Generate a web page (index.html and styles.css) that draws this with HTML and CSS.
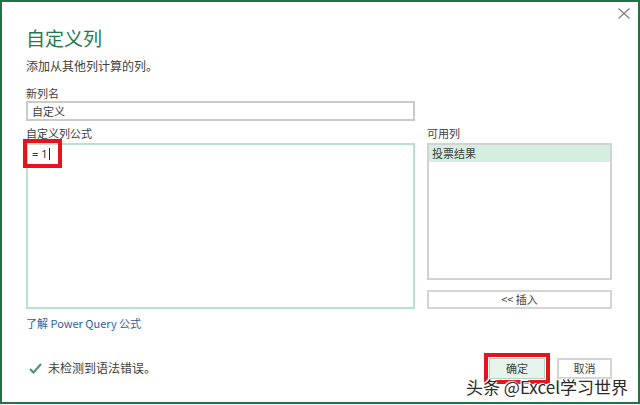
FILE: index.html
```html
<!DOCTYPE html>
<html lang="zh-CN">
<head>
<meta charset="utf-8">
<title>自定义列</title>
<link rel="stylesheet" href="styles.css">
</head>
<body>
<div class="dialog">
  <div class="topbar">
    <svg class="close" width="12" height="11" viewBox="0 0 12 11"><path d="M0.5 0.5 L11.5 10.5 M11.5 0.5 L0.5 10.5" stroke="#7a7a7a" stroke-width="1.1" fill="none"/></svg>
  </div>
  <h1 class="title">自定义列</h1>
  <p class="subtitle">添加从其他列计算的列。</p>
  <div class="label">新列名</div>
  <div class="input">自定义</div>
  <div class="columns">
    <div class="col-left">
      <div class="label">自定义列公式</div>
      <div class="formula">
        <span class="code">= 1</span><span class="caret"></span>
        <div class="mark"></div>
      </div>
    </div>
    <div class="col-right">
      <div class="label">可用列</div>
      <div class="list"><div class="item selected">投票结果</div></div>
      <div class="insert">&lt;&lt; 插入</div>
    </div>
  </div>
  <div class="link">了解 Power Query 公式</div>
  <div class="footer">
    <div class="status">
      <svg class="check" width="13" height="11" viewBox="0 0 13 11"><path d="M1 6 L4.5 9.5 L12 1" stroke="#4d8f6d" stroke-width="2" fill="none"/></svg>
      <span>未检测到语法错误。</span>
    </div>
    <div class="actions">
      <button class="btn primary">确定</button>
      <button class="btn">取消</button>
    </div>
  </div>
  <div class="watermark">头条 @Excel学习世界</div>
</div>
</body>
</html>
```
FILE: styles.css
```css
html, body {
  margin: 0;
  padding: 0;
  background: #ffffff;
}

.dialog {
  position: relative;
  width: 640px;
  height: 404px;
  box-sizing: border-box;
  border: 2px solid #217346;
  padding: 0 26px 0 24px;
  font-family: "Noto Sans CJK SC", "Noto Sans", sans-serif;
  color: #444444;
  overflow: hidden;
}

.topbar {
  display: flex;
  justify-content: flex-end;
  height: 24px;
  box-sizing: border-box;
  padding-top: 6px;
  margin-right: -18px;
}

.close {
  display: block;
}

.title {
  margin: 0;
  font-size: 19px;
  line-height: 24px;
  font-weight: normal;
  color: #24784f;
}

.subtitle {
  margin: 8px 0 0;
  font-size: 12px;
  line-height: 16px;
  color: #404040;
}

.label {
  font-size: 11px;
  line-height: 16px;
  color: #404040;
}

.subtitle + .label {
  margin-top: 11px;
}

.input {
  width: 389px;
  height: 20px;
  box-sizing: border-box;
  border: 2px solid #cbcbcb;
  padding-left: 4px;
  font-size: 11px;
  line-height: 16px;
  color: #404040;
}

.columns {
  display: flex;
  gap: 12px;
  margin-top: 4px;
}

.col-left {
  width: 389px;
}

.col-right {
  width: 185px;
}

.formula {
  position: relative;
  margin-top: 2px;
  height: 166px;
  box-sizing: border-box;
  border: 2px solid #b9e2cc;
  padding: 2px 4px;
  font-family: "Noto Sans", sans-serif;
  font-size: 11px;
  line-height: 14px;
  color: #444444;
}

.code {
  color: #333333;
}

.caret {
  display: inline-block;
  width: 1px;
  height: 12px;
  margin-left: 2px;
  vertical-align: -2px;
  background: #222222;
}

.mark {
  position: absolute;
  left: -5px;
  top: -6px;
  width: 39px;
  height: 29px;
  box-sizing: border-box;
  border: 4px solid #e5141c;
}

.list {
  margin-top: 2px;
  height: 137px;
  box-sizing: border-box;
  border: 2px solid #d2d2d2;
}

.item {
  height: 17px;
  line-height: 17px;
  padding-left: 3px;
  font-size: 11px;
  color: #404040;
}

.item.selected {
  background: #d3efdf;
}

.insert {
  margin-top: 10px;
  height: 19px;
  box-sizing: border-box;
  border: 2px solid #d4d4d4;
  text-align: center;
  font-size: 11px;
  line-height: 15px;
  color: #404040;
}

.link {
  margin-top: 6px;
  font-size: 11px;
  line-height: 16px;
  color: #2f5e9e;
}

.footer {
  display: flex;
  justify-content: space-between;
  align-items: center;
  height: 24px;
  margin-top: 25px;
}

.status {
  display: flex;
  align-items: center;
  gap: 6px;
  padding-left: 3px;
  font-size: 12px;
  line-height: 16px;
  color: #404040;
}

.check {
  display: block;
}

.actions {
  display: flex;
  gap: 12px;
}

.btn {
  width: 55px;
  height: 21px;
  box-sizing: border-box;
  padding: 0;
  background: #ffffff;
  border: 2px solid #d4d4d4;
  font-family: "Noto Sans CJK SC", sans-serif;
  font-size: 11px;
  line-height: 15px;
  color: #404040;
}

.btn.primary {
  width: 56px;
  background: #e6f4ec;
  border: 1px solid #a9d6bc;
  outline: 4px solid #e5141c;
  outline-offset: 1px;
}

.watermark {
  position: absolute;
  right: 10px;
  top: 375px;
  font-family: "Noto Sans CJK SC", sans-serif;
  font-size: 17px;
  line-height: 20px;
  color: #2a2a2a;
  text-shadow: 0 0 2px #ffffff, 0 0 2px #ffffff, 1px 1px 0 #ffffff, -1px -1px 0 #ffffff;
}
```
